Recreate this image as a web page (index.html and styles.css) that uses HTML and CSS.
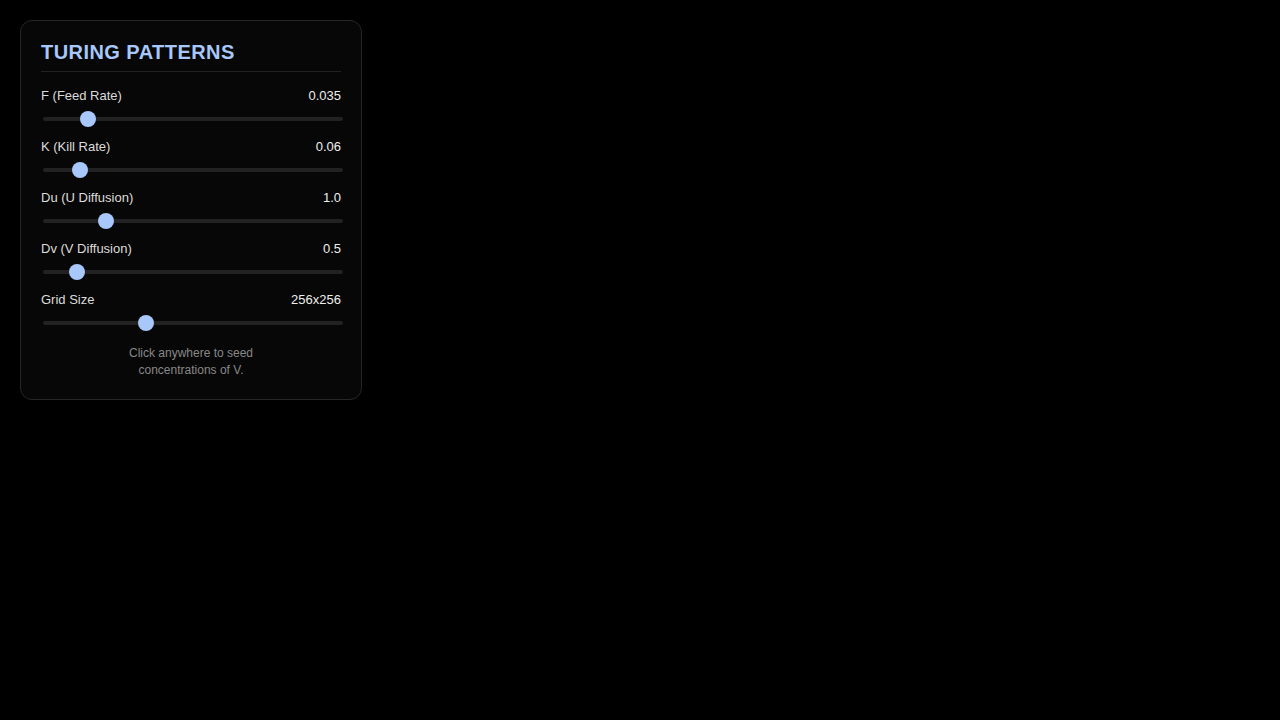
FILE: index.html
```html
<!DOCTYPE html>
<html>
<head>
<meta charset="utf-8">
<link rel="stylesheet" href="styles.css">
</head>
<body>
<div class="panel">
  <h1 class="title">TURING PATTERNS</h1>
  <div class="control">
    <div class="row"><span class="label">F (Feed Rate)</span><span class="value">0.035</span></div>
    <input class="slider" type="range" min="0" max="1000" value="130">
  </div>
  <div class="control">
    <div class="row"><span class="label">K (Kill Rate)</span><span class="value">0.06</span></div>
    <input class="slider" type="range" min="0" max="1000" value="102">
  </div>
  <div class="control">
    <div class="row"><span class="label">Du (U Diffusion)</span><span class="value">1.0</span></div>
    <input class="slider" type="range" min="0" max="1000" value="194">
  </div>
  <div class="control">
    <div class="row"><span class="label">Dv (V Diffusion)</span><span class="value">0.5</span></div>
    <input class="slider" type="range" min="0" max="1000" value="092">
  </div>
  <div class="control">
    <div class="row"><span class="label">Grid Size</span><span class="value">256x256</span></div>
    <input class="slider" type="range" min="0" max="1000" value="334">
  </div>
  <p class="hint">Click anywhere to seed<br>concentrations of V.</p>
</div>
</body>
</html>
```
FILE: styles.css
```css
html, body {
  margin: 0;
  padding: 0;
  background: #000;
  font-family: "Liberation Sans", Arial, sans-serif;
}
body {
  padding: 20px;
}
.panel {
  width: 300px;
  padding: 20px;
  background: #070707;
  border: 1px solid #262626;
  border-radius: 12px;
}
.title {
  margin: 0 0 16px 0;
  padding-bottom: 7px;
  border-bottom: 1px solid #222;
  font-size: 20px;
  line-height: 23px;
  font-weight: bold;
  letter-spacing: 0.45px;
  color: #a8c7fa;
}
.control {
  margin-bottom: 12px;
}
.row {
  display: flex;
  justify-content: space-between;
  font-size: 13px;
  line-height: 15px;
  margin-bottom: 8px;
}
.label {
  color: #dcdcdc;
}
.value {
  color: #eeeeee;
}
.slider {
  -webkit-appearance: none;
  appearance: none;
  display: block;
  width: 100%;
  height: 16px;
  margin: 0 0 0 2px;
  padding: 0;
  background: transparent;
}
.slider::-webkit-slider-runnable-track {
  height: 4px;
  background: #222;
  border-radius: 2px;
}
.slider::-webkit-slider-thumb {
  -webkit-appearance: none;
  appearance: none;
  width: 16px;
  height: 16px;
  margin-top: -6px;
  border-radius: 50%;
  background: #a8c7fa;
  border: none;
}
.hint {
  margin: 14px 0 0 0;
  text-align: center;
  font-size: 12px;
  line-height: 17px;
  color: #888;
}
```
